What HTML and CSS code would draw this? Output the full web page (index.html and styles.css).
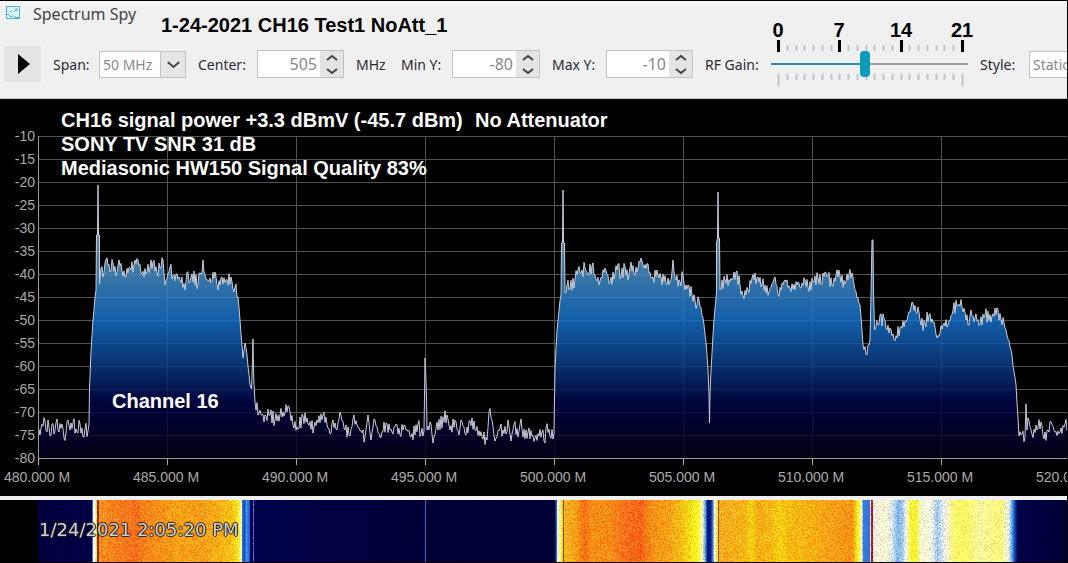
FILE: index.html
```html
<!DOCTYPE html>
<html lang="en">

<head>
    <meta charset="utf-8">
    <meta name="viewport" content="width=device-width, initial-scale=1.0">
    <title>Spectrum Spy</title>
    <link rel="stylesheet" href="styles.css">
</head>

<body>
    <header class="topbar">
        <div class="titlebar">
            <svg class="logo" width="15" height="15" viewBox="0 0 15 15" fill="none" stroke="#4fb0d0">
                <path d="M.5.5h13v12H.5z" fill="#d9f4fb" />
                <path d="M1 8.500h2l1 2h2l1-1 2 2h4M4 5l2 2M8 6l3-3M9 3h2v2" />
            </svg>
            <h1 class="app-name">Spectrum Spy</h1>
            <p class="note note-title">1-24-2021 CH16 Test1 NoAtt_1</p>
        </div>

        <form class="toolbar">
            <button type="button" class="play" aria-label="Start">
                <svg width="12" height="20" viewBox="0 0 12 20"><path d="M0 0l12 10L0 20z" /></svg>
            </button>

            <label for="span">Span:</label>
            <div class="combo">
                <select id="span">
                    <option>50 MHz</option>
                </select>
                <svg class="combo-arrow" width="25" height="25" viewBox="0 0 25 25"><path d="M7 10l6 5 6-5" /></svg>
            </div>

            <label for="center">Center:</label>
            <div class="spin">
                <input id="center" type="text" value="505">
                <div class="spin-buttons">
                    <button type="button" aria-label="Center up"><svg width="12" height="8" viewBox="0 0 12 8"><path d="M1 6l5-4 5 4" /></svg></button>
                    <button type="button" aria-label="Center down"><svg width="12" height="8" viewBox="0 0 12 8"><path d="M1 2l5 4 5-4" /></svg></button>
                </div>
            </div>
            <span>MHz</span>

            <label for="miny">Min Y:</label>
            <div class="spin">
                <input id="miny" type="text" value="-80">
                <div class="spin-buttons">
                    <button type="button" aria-label="Min Y up"><svg width="12" height="8" viewBox="0 0 12 8"><path d="M1 6l5-4 5 4" /></svg></button>
                    <button type="button" aria-label="Min Y down"><svg width="12" height="8" viewBox="0 0 12 8"><path d="M1 2l5 4 5-4" /></svg></button>
                </div>
            </div>

            <label for="maxy">Max Y:</label>
            <div class="spin">
                <input id="maxy" type="text" value="-10">
                <div class="spin-buttons">
                    <button type="button" aria-label="Max Y up"><svg width="12" height="8" viewBox="0 0 12 8"><path d="M1 6l5-4 5 4" /></svg></button>
                    <button type="button" aria-label="Max Y down"><svg width="12" height="8" viewBox="0 0 12 8"><path d="M1 2l5 4 5-4" /></svg></button>
                </div>
            </div>

            <label for="gain">RF Gain:</label>
            <div class="gain">
                <svg class="gain-scale" id="gainScale" width="208" height="70"></svg>
                <input id="gain" type="range" min="0" max="21" value="10">
            </div>

            <label for="style">Style:</label>
            <div class="combo">
                <select id="style">
                    <option>Static Gradient</option>
                </select>
            </div>
        </form>
    </header>

    <main>
        <section class="spectrum">
            <svg id="plot" class="plot">
                <defs>
                    <linearGradient id="fill" gradientUnits="userSpaceOnUse" x1="0" y1="136" x2="0" y2="458">
                        <stop offset="0.30" stop-color="#84a8c0" />
                        <stop offset="0.42" stop-color="#4a93cc" />
                        <stop offset="0.57" stop-color="#1674d0" />
                        <stop offset="0.70" stop-color="#0b428c" />
                        <stop offset="0.83" stop-color="#010448" />
                        <stop offset="1" stop-color="#01011a" />
                    </linearGradient>
                </defs>
            </svg>
            <div class="notes">
                <p class="note">CH16 signal power +3.3 dBmV (-45.7 dBm)</p>
                <p class="note">No Attenuator</p>
                <p class="note">SONY TV SNR 31 dB</p>
                <p class="note">Mediasonic HW150 Signal Quality 83%</p>
            </div>
            <p class="note note-channel">Channel 16</p>
        </section>

        <section class="waterfall">
            <canvas id="waterfall" height="62"></canvas>
            <time class="stamp">1/24/2021 2:05:20 PM</time>
        </section>
    </main>

    <script src="script.js"></script>
</body>

</html>
```

FILE: styles.css
```css
* {
    box-sizing: border-box;
}

body {
    margin: 0;
    background-color: #000;
    border: 1px solid #000;
    border-left: none;
    overflow-x: hidden;
    font-family: "Noto Sans", "Open Sans", sans-serif;
    font-size: 14px;
    color: #2b2b33;
}

h1,
p {
    margin: 0;
}

/* top bar */
.topbar {
    height: 98px;
    background-color: #f0f0f0;
    border-top: 5px solid #f5f5f5;
    border-bottom: 1px solid #c4c8c8;
    overflow: hidden;
}

.titlebar {
    display: flex;
    align-items: flex-start;
    height: 40px;
    padding-left: 6px;
}

.logo {
    margin-right: 12px;
}

.app-name {
    width: 128px;
    font-size: 16px;
    font-weight: 400;
    line-height: 16px;
    white-space: nowrap;
    color: #444;
}

.note {
    font-family: "Liberation Sans", Arial, sans-serif;
    font-size: 20px;
    font-weight: 700;
    line-height: 24px;
    white-space: nowrap;
    color: #fff;
}

.note-title {
    padding-top: 7px;
    color: #000;
}

.toolbar {
    display: grid;
    grid-template-columns: 37px 34px 87px 47px 87px 33px 39px 88px 42px 87px 54px 197px 37px 140px;
    column-gap: 12px;
    align-items: center;
    height: 36px;
    padding-left: 4px;
    white-space: nowrap;
}

.toolbar button {
    display: flex;
    align-items: center;
    justify-content: center;
    padding: 0;
    border: none;
    background-color: #e4e4e4;
}

.toolbar .play {
    height: 36px;
    padding-left: 2px;
}

.combo {
    position: relative;
    height: 27px;
    border: 1px solid #c2c2c2;
    background-color: #fff;
}

.combo select {
    width: 100%;
    height: 25px;
    padding: 0 3px;
    border: none;
    background: none;
    appearance: none;
    font: inherit;
    color: #888;
}

.combo-arrow {
    position: absolute;
    top: 0;
    right: 0;
    background-color: #e6e6e6;
    border-left: 1px solid #c2c2c2;
    pointer-events: none;
}

.combo-arrow path,
.spin-buttons path {
    fill: none;
    stroke: #444;
    stroke-width: 2;
}

.spin {
    display: flex;
    height: 28px;
    border: 1px solid #c2c2c2;
    background-color: #fff;
}

.spin input {
    flex: 1;
    min-width: 0;
    padding: 0 3px 0 0;
    border: none;
    background: none;
    text-align: right;
    font: inherit;
    font-size: 16px;
    color: #888;
}

.spin-buttons {
    display: flex;
    flex-direction: column;
    width: 23px;
}

.spin-buttons button {
    flex: 1;
}

/* gain slider */
.gain {
    position: relative;
    height: 26px;
}

.gain-scale {
    position: absolute;
    left: 0;
    bottom: -12px;
}

.gain-scale text {
    font: 700 20px "Liberation Sans", Arial, sans-serif;
    text-anchor: middle;
}

.gain input {
    position: relative;
    display: block;
    width: 100%;
    height: 26px;
    margin: 0;
    appearance: none;
    background: none;
}

.gain input::-webkit-slider-runnable-track {
    height: 2px;
    background: linear-gradient(90deg, #2f8ca8 48%, #a0a0a0 48%);
}

.gain input::-webkit-slider-thumb {
    appearance: none;
    width: 10px;
    height: 26px;
    margin-top: -12px;
    border-radius: 4px;
    background-color: #0f9bbd;
}

/* spectrum */
.spectrum {
    position: relative;
}

.plot {
    display: block;
    width: 100%;
    height: 397px;
}

.plot text {
    font: 14px "Liberation Sans", Arial, sans-serif;
    fill: #aaa;
}

.notes {
    position: absolute;
    top: 9px;
    left: 61px;
    display: grid;
    grid-template-columns: 399px auto;
    column-gap: 15px;
}

.notes .note:nth-child(n+3) {
    grid-column: 1 / -1;
}

.note-channel {
    position: absolute;
    top: 290px;
    left: 112px;
}

/* waterfall */
.waterfall {
    position: relative;
    border-top: 4px solid #efefef;
}

.waterfall canvas {
    display: block;
}

.stamp {
    position: absolute;
    top: 18px;
    left: 39px;
    font-family: "DejaVu Sans", Verdana, sans-serif;
    font-size: 18px;
    line-height: 24px;
    color: #d0d0d0;
    text-shadow: 1px 0 1px #222, -1px 0 1px #222, 0 1px 1px #222, 0 -1px 1px #222;
}
```

FILE: script.js
```js
const svgNS = "http://www.w3.org/2000/svg";
const plot = document.querySelector("#plot");
const left = 38;
const top0 = 136;
const bottom = 458;

// same noise on every load
let seed = 7;
function rnd() {
    seed = (seed * 16807) % 2147483647;
    return seed / 2147483647;
}

function add(parent, name, attrs, text) {
    const el = document.createElementNS(svgNS, name);
    for (const key in attrs) el.setAttribute(key, attrs[key]);
    if (text !== undefined) el.textContent = text;
    parent.appendChild(el);
    return el;
}

// x,y pairs of the signal
const trace = `38,430 41,428 45,421 47,432 48,420 50,436 52,424 54,434 57,419 59,432 62,424 64,438 66,433 68,420 70,430 73,423 77,432 80,424 83,437 85,429 88,431
89,425 89.5,388 91,352 93,320 95,297 96,290 96.5,235 97.5,235 98,185 98.5,235 99.5,235 99.5,284 101,268 103,277 105,263 107,258 110,272 113,263 116,276 119,260 122,271 126,277 130,268
134,265 138,260 142,274 147,272 150,268 153,262 157,273 160,268 163,260 165,285 170,267 173,276 177,274 180,280 185,290 187,272 190,282 192,274 198,284 200,273 202,272 203,260 204,272
207,280 211,283 215,272 218,290 222,277 226,280 231,277 234,292 236,284 238,297 240,320 243,358 245,343 247,355 250,385 251.5,389 252.5,360 253,339 253.5,370 254,385 255,402 259,413 262,415 266,416 270,415 275,420
280,415 285,413 288,406 290,412 293,425 298,429 303,416 308,424 314,427 323,415 327,425 330,434 333,420 337,430 340,412 345,430 350,436 354,415 358,427 365,437 368,415 371,440 374,419 380,437 386,423 392,432 396,424
400,435 405,426 411,437 418,424 421,434 424,431 424.5,397 425,358 426,380 426.5,397 427,430 431,424 433,443 436,428 447,415 450,430 455,420 459,435 461,420 466,435 470,421 476,430 482,437 487,440 489,412 492,420
495,441 500,428 506,434 508,420 511,441 514,424 518,437 521,419 523,437 528,432 535,438 542,432 545,443 546,428 550,436 554,434 554.5,399 555,370 557,330 559,310 561,295 561.5,243 562.5,243 563,190 563.5,243 564.5,243
565,293 567,285 570,288 575,280 578,270 580,273 585,268 588,275 592,266 596,280 600,281 605,268 610,282 615,274 618,264 621,276 625,266 628,280 631,262 634,274 638,268 641,258 644,268 648,264 651,278 658,275
661,277 666,284 671,280 672,272 673,260 674,272 676,280 680,282 683,275 685,290 688,285 692,295 695,300 697,305 699,300 703,318 706,342 708,370 709,395 709.5,423 710,395 711,370 713,335 715,308 716.5,293 716.5,243
717.5,238 718,192 718.5,238 719.5,238 720,290 725,280 732,280 736,272 740,285 743,296 748,290 752,278 757,278 762,284 769,292 775,277 778,294 785,280 790,288 798,282 801,288 805,280 808,287 813,282 818,278
822,284 825,272 828,276 832,285 836,275 840,276 845,284 849,274 852,273 855,290 860,305 862,330 863,345 866,354 869,345 870,340 871,295 872,240 873,240 873.5,290 874.5,330 878,325 880,315 882,326 883,314
887,330 890,328 894,340 900,328 906,322 908,315 911,307 913,303 916,312 918,307 921,325 925,323 929,315 934,322 937,338 940,333 943,325 948,325 953,310 958,305 962,307 965,312 968,325 970,315 975,318 980,324
985,315 992,316 998,310 1001,320 1004,323 1007,335 1011,350 1014,372 1016,385 1018,418 1019,436 1022,434 1025,437 1026,404 1027,430 1028,418 1032,434 1037,430 1041,422 1044,439 1048,430 1051,422 1055,432 1060,432 1065,424 1069,426`
    .split(/\s+/).map(p => p.split(",").map(Number));

function buildTrace() {
    const points = [trace[0]];
    let sign = 1;
    for (let i = 1; i < trace.length; i++) {
        const [x1, y1] = trace[i - 1];
        const [x2, y2] = trace[i];
        const steps = Math.floor(x2 - x1);
        for (let s = 1; s < steps; s++) {
            const t = s / steps;
            const amp = Math.abs(y2 - y1) > 14 ? 2 : 7;
            sign = -sign;
            points.push([x1 + (x2 - x1) * t, y1 + (y2 - y1) * t + sign * rnd() * amp]);
        }
        points.push([x2, y2]);
    }
    return points.map(p => p[0].toFixed(1) + "," + p[1].toFixed(1)).join(" ");
}

function drawPlot() {
    const g = add(plot, "g", { transform: "translate(0,-99)" });

    for (let i = 0; i < 15; i++) {
        const y = top0 + i * 23;
        add(g, "path", { d: `M${left} ${y + 0.5}H4000`, stroke: "#525252" });
        add(g, "text", { x: 35, y: y + 5, "text-anchor": "end" }, -10 - i * 5);
    }
    for (let i = 0; i < 9; i++) {
        const x = left + i * 129;
        add(g, "path", { d: `M${x + 0.5} ${top0}V${bottom}`, stroke: "#525252" });
        add(g, "path", { d: `M${x + 0.5} ${bottom}v7`, stroke: "#aaa" });
        add(g, "text", { x: x - 1, y: 482, "text-anchor": "middle" }, (480 + i * 5) + ".000 M");
    }

    const points = buildTrace();
    add(g, "polygon", { points: `${left},${bottom} ${points} 1069,${bottom}`, fill: "url(#fill)", "fill-opacity": 0.82 });
    add(g, "polyline", { points, fill: "none", stroke: "#c8ccd8", "stroke-width": 1 });
    add(g, "path", { d: `M${left + 0.5} ${top0}V${bottom + 0.5}H4000`, fill: "none", stroke: "#999" });
}

function drawGainScale() {
    const scale = document.querySelector("#gainScale");
    for (let i = 0; i <= 21; i++) {
        const x = Math.round(7 + i * 8.75);
        const main = i % 7 === 0;
        add(scale, "path", { d: main ? `M${x + 0.5} 21v12` : `M${x + 0.5} 26v6`, stroke: main ? "#000" : "#c4c4c4", "stroke-width": main ? 3 : 2 });
        add(scale, "path", { d: `M${x + 0.5} 55v${i % 21 === 0 ? 12 : 6}`, stroke: "#c4c4c4", "stroke-width": 2 });
        if (main) add(scale, "text", { x: x, y: 18 }, i);
    }
}

// colour along the frequency axis: x, colour
const heat = [
    [38, "00003c"], [91, "000046"], [92, "3070d0"], [93, "ffffff"], [95, "ffffc0"], [96, "ffe020"], [97, "803000"], [98, "803000"], [99, "ff9020"],
    [110, "ff8418"], [135, "ff701c"], [150, "ff8a18"], [180, "ffa414"], [200, "ff9c18"], [215, "ffaa14"], [232, "ffc414"], [238, "fff020"],
    [241, "ffffc0"], [242, "3070d8"], [244, "1050b8"], [246, "4090f0"], [249, "2060d0"], [250, "000050"], [252, "000060"], [253, "6a5ad0"], [254, "00004c"],
    [310, "000042"], [424, "000038"], [425, "2f6cc0"], [426, "000036"], [554, "000038"], [556, "2060d0"], [557, "f0f8ff"], [560, "ffff60"], [562, "ffd020"],
    [563, "7a5000"], [564, "ffb020"], [575, "ffa414"], [584, "ff7014"], [592, "ff9014"], [610, "ff8c14"], [625, "ff7018"], [640, "ff6018"],
    [650, "ff8c14"], [670, "ffa414"], [684, "ffc810"], [697, "ffff20"], [702, "ffffc0"], [705, "5a9ae8"], [707, "001880"], [710, "001880"],
    [712, "3070c0"], [714, "fffff0"], [717, "ffe030"], [718, "8a5800"], [719, "ffac20"], [745, "ffb414"], [751, "ffd40c"], [757, "ffac14"],
    [770, "ffb814"], [780, "ffd010"], [790, "ffb80c"], [800, "ffb80c"], [830, "ffa014"], [852, "ff9414"], [858, "ffff20"], [861, "ffffd0"],
    [863, "3080e0"], [869, "3a70d0"], [870, "e0e0ff"], [871, "a02030"], [872, "b01828"], [873, "fff0e0"], [885, "ffffd0"], [892, "d8e8f0"], [897, "7cb4f0"],
    [902, "a0c8f0"], [906, "fffff0"], [910, "ffff38"], [916, "fff430"], [920, "ffffd0"], [930, "ffffe0"], [937, "a0c8f4"], [941, "d0e0f0"],
    [946, "ffffe0"], [953, "ffff70"], [965, "ffff60"], [980, "ffffa0"], [1000, "ffff78"], [1008, "f0f8e0"], [1011, "70b0f0"], [1014, "1050c0"],
    [1017, "000048"], [1067, "000034"], [4000, "000034"]
].map(([x, c]) => [x, [0, 2, 4].map(i => parseInt(c.substr(i, 2), 16))]);

function heatAt(x) {
    let i = 1;
    while (i < heat.length - 1 && heat[i][0] < x) i++;
    const [x1, a] = heat[i - 1];
    const [x2, b] = heat[i];
    const t = Math.min(1, Math.max(0, (x - x1) / (x2 - x1)));
    return a.map((v, k) => v + (b[k] - v) * t);
}

function drawWaterfall() {
    const canvas = document.querySelector("#waterfall");
    canvas.width = document.body.clientWidth;
    const ctx = canvas.getContext("2d");
    const img = ctx.createImageData(canvas.width, canvas.height);
    for (let y = 0; y < canvas.height; y++) {
        for (let x = 0; x < canvas.width; x++) {
            const p = (y * canvas.width + x) * 4;
            img.data[p + 3] = 255;
            if (x < left) continue;
            const c = heatAt(x);
            const n = rnd() + rnd() - 1;
            const amp = c[0] < 60 ? 8 : 48;
            // strong signals flicker in green, weak ones in blue
            img.data[p] = c[0] + (c[2] > 150 ? n * amp : n * amp / 3);
            img.data[p + 1] = c[1] + (c[0] < 60 ? 0 : n * amp);
            img.data[p + 2] = c[2] + n * amp / 2;
        }
    }
    ctx.putImageData(img, 0, 0);
}

drawPlot();
drawGainScale();
drawWaterfall();
```
